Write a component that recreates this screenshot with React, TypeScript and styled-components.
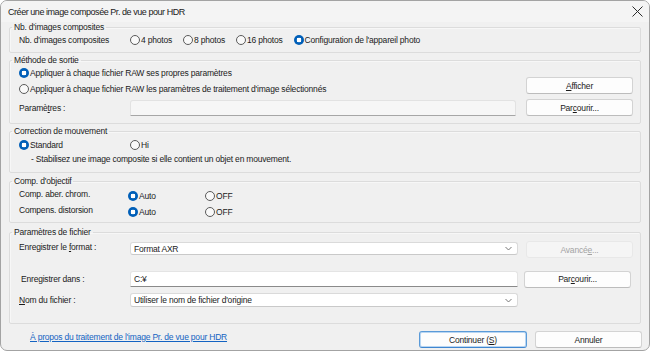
import styled, { createGlobalStyle } from "styled-components";

const GlobalStyle = createGlobalStyle`
  html, body {
    margin: 0;
    padding: 0;
    background: #ffffff;
  }
  body {
    font-family: "Liberation Sans", Arial, sans-serif;
  }
`;

const Radio = ({ checked, children }: { checked?: boolean; children: React.ReactNode }) => (
  <RadioLabel>
    <Circle $checked={!!checked} />
    <span>{children}</span>
  </RadioLabel>
);

const Chevron = () => (
  <svg width="7" height="5" viewBox="0 0 7 5">
    <path d="M0.5 1 L3.5 4 L6.5 1" fill="none" stroke="#6a6a6a" strokeWidth="0.9" />
  </svg>
);

const App = () => {
  return (
    <>
      <GlobalStyle />
      <Window>
        <TitleBar>
          <Title>Créer une image composée Pr. de vue pour HDR</Title>
          <CloseButton aria-label="Fermer">
            <svg width="11" height="11" viewBox="0 0 11 11">
              <path d="M0.5 0.5 L10.5 10.5 M10.5 0.5 L0.5 10.5" stroke="#2b2b2b" strokeWidth="1" />
            </svg>
          </CloseButton>
        </TitleBar>

        <Body>
          {/* Nb. d'images */}
          <Group $mt={0} $pb={4}>
            <Legend>Nb. d'images composites</Legend>
            <Row $h={16}>
              <RowLabel $w={111}>Nb. d'images composites</RowLabel>
              <Options>
                <Radio>4 photos</Radio>
                <Radio>8 photos</Radio>
                <Radio>16 photos</Radio>
                <Radio checked>Configuration de l'appareil photo</Radio>
              </Options>
            </Row>
          </Group>

          {/* Méthode de sortie */}
          <Group $mt={2} $pb={7}>
            <Legend>Méthode de sortie</Legend>
            <Split>
              <Column>
                <Row $h={16}>
                  <Radio checked>Appliquer à chaque fichier RAW ses propres paramètres</Radio>
                </Row>
                <Row $h={16}>
                  <Radio>
                    App<U>l</U>iquer à chaque fichier RAW les paramètres de traitement d'image sélectionnés
                  </Radio>
                </Row>
                <Row $h={17} $mt={2}>
                  <RowLabel $w={111}>
                    Paramè<U>t</U>res :
                  </RowLabel>
                  <Field $disabled />
                </Row>
              </Column>
              <ButtonColumn>
                <Button>
                  <U>A</U>fficher
                </Button>
                <Button>
                  Par<U>c</U>ourir...
                </Button>
              </ButtonColumn>
            </Split>
          </Group>

          {/* Correction de mouvement */}
          <Group $mt={2} $pb={6}>
            <Legend>Correction de mouvement</Legend>
            <Stack $pt={2}>
              <Row $h={14}>
                <OptionCell $w={111}>
                  <Radio checked>Standard</Radio>
                </OptionCell>
                <Radio>Hi</Radio>
              </Row>
              <Row $h={14}>
                <Note>- Stabilisez une image composite si elle contient un objet en mouvement.</Note>
              </Row>
            </Stack>
          </Group>

          {/* Comp. d'objectif */}
          <Group $mt={3} $pb={2}>
            <Legend>Comp. d'objectif</Legend>
            <Stack $pt={2}>
              <Row $h={16}>
                <RowLabel $w={109} $raise>Comp. aber. chrom.</RowLabel>
                <OptionCell $w={77}>
                  <Radio checked>Auto</Radio>
                </OptionCell>
                <Radio>OFF</Radio>
              </Row>
              <Row $h={16}>
                <RowLabel $w={109} $raise>Compens. distorsion</RowLabel>
                <OptionCell $w={77}>
                  <Radio checked>Auto</Radio>
                </OptionCell>
                <Radio>OFF</Radio>
              </Row>
            </Stack>
          </Group>

          {/* Paramètres de fichier */}
          <Group $mt={4} $pb={16}>
            <Legend>Paramètres de fichier</Legend>
            <Stack $pt={4}>
              <Row $h={17} $top>
                <RowLabel $w={111} $top>
                  Enregistrer le <U>f</U>ormat :
                </RowLabel>
                <Select>
                  <span>Format AXR</span>
                  <Chevron />
                </Select>
                <Button $disabled>
                  Avancé<U>e</U>...
                </Button>
              </Row>
              <Row $h={16} $mt={13}>
                <RowLabel $w={111} $indent={2}>
                  Enregistrer dans :
                </RowLabel>
                <Field>C:¥</Field>
                <Button $shift={-2}>
                  Par<U>c</U>ourir...
                </Button>
              </Row>
              <Row $h={14} $mt={6}>
                <RowLabel $w={111}>
                  <U>N</U>om du fichier :
                </RowLabel>
                <Select $h={14}>
                  <span>Utiliser le nom de fichier d'origine</span>
                  <Chevron />
                </Select>
                <ButtonSpace />
              </Row>
            </Stack>
          </Group>
        </Body>

        <Footer>
          <HelpLink href="#">À propos du traitement de l'image Pr. de vue pour HDR</HelpLink>
          <FooterButtons>
            <Button $primary $w={108}>
              Continuer (<U>S</U>)
            </Button>
            <Button $w={107}>Annuler</Button>
          </FooterButtons>
        </Footer>
      </Window>
    </>
  );
};

export default App;

// styles
const Window = styled.div`
  width: 650px;
  height: 351px;
  box-sizing: border-box;
  border: 1px solid #a3a3a3;
  border-radius: 7px;
  background: #f0f0f0;
  overflow: hidden;
  display: flex;
  flex-direction: column;
  font-size: 8.5px;
  letter-spacing: -0.2px;
  color: #1b1b1b;
`;

const TitleBar = styled.div`
  height: 21px;
  flex-shrink: 0;
  display: flex;
  align-items: center;
  justify-content: space-between;
  padding: 0 6px 0 7px;
  background: #f4f4f4;
`;

const Title = styled.div`
  font-size: 9px;
  letter-spacing: -0.45px;
  color: #1a1a1a;
`;

const CloseButton = styled.div`
  display: flex;
  align-items: center;
  justify-content: center;
  width: 11px;
  height: 11px;
`;

const Body = styled.div`
  display: flex;
  flex-direction: column;
  padding: 0 8px;
`;

const Group = styled.fieldset<{ $mt: number; $pb: number }>`
  margin: ${({ $mt }) => $mt}px 0 0;
  padding: 0 7px ${({ $pb }) => $pb}px 9px;
  border: 1px solid #dcdcdc;
  border-radius: 2px;
  box-shadow: inset 1px 1px 0 #f7f7f7;
  min-width: 0;
`;

const Legend = styled.legend`
  padding: 0 2px;
  margin-left: -7px;
  line-height: 10px;
  height: 10px;
`;

const Stack = styled.div<{ $pt?: number }>`
  display: flex;
  flex-direction: column;
  padding-top: ${({ $pt }) => $pt ?? 0}px;
`;

const Row = styled.div<{ $h: number; $mt?: number; $top?: boolean }>`
  display: flex;
  align-items: ${({ $top }) => ($top ? "flex-start" : "center")};
  height: ${({ $h }) => $h}px;
  margin-top: ${({ $mt }) => $mt ?? 0}px;
  white-space: nowrap;
`;

const RowLabel = styled.div<{ $w: number; $indent?: number; $raise?: boolean; $top?: boolean }>`
  width: ${({ $w }) => $w}px;
  flex-shrink: 0;
  padding-left: ${({ $indent }) => $indent ?? 0}px;
  box-sizing: border-box;
  line-height: 12px;
  margin-top: ${({ $top }) => ($top ? "0" : "0")};
  position: relative;
  top: ${({ $raise }) => ($raise ? "-2px" : "0")};
`;

const Options = styled.div`
  display: flex;
  align-items: center;
  gap: 11px;
`;

const OptionCell = styled.div<{ $w: number }>`
  width: ${({ $w }) => $w}px;
  flex-shrink: 0;
  display: flex;
  align-items: center;
`;

const RadioLabel = styled.label`
  display: inline-flex;
  align-items: center;
  gap: 1px;
  white-space: nowrap;
  line-height: 12px;
`;

const Circle = styled.span<{ $checked: boolean }>`
  width: 10px;
  height: 10px;
  box-sizing: border-box;
  border-radius: 50%;
  flex-shrink: 0;
  border: ${({ $checked }) => ($checked ? "none" : "1px solid #5a5a5a")};
  background: ${({ $checked }) =>
    $checked ? "radial-gradient(circle, #ffffff 0 2.2px, #005fb8 2.6px)" : "#f9f9f9"};
`;

const Note = styled.div`
  padding-left: 12px;
  line-height: 12px;
`;

const U = styled.span`
  text-decoration: underline;
  text-underline-offset: 1px;
`;

const Split = styled.div`
  display: flex;
  gap: 10px;
`;

const Column = styled.div`
  display: flex;
  flex-direction: column;
  flex: 1;
  min-width: 0;
`;

const ButtonColumn = styled.div`
  display: flex;
  flex-direction: column;
  gap: 5px;
  width: 107px;
  margin-top: 12px;
`;

const Field = styled.div<{ $disabled?: boolean }>`
  flex: 1;
  align-self: stretch;
  margin-top: ${({ $disabled }) => ($disabled ? "1px" : "0")};
  box-sizing: border-box;
  display: flex;
  align-items: center;
  padding-left: 3px;
  background: ${({ $disabled }) => ($disabled ? "#f6f6f6" : "#ffffff")};
  border: 1px solid ${({ $disabled }) => ($disabled ? "#e2e2e2" : "#e4e4e4")};
  border-bottom: 1px solid ${({ $disabled }) => ($disabled ? "#a6a6a6" : "#8a8a8a")};
  border-radius: 3px 3px 1px 1px;
  max-width: ${({ $disabled }) => ($disabled ? "386px" : "388px")};
  margin-right: ${({ $disabled }) => ($disabled ? "0" : "8px")};
`;

const Select = styled.div<{ $h?: number }>`
  width: 388px;
  height: ${({ $h }) => $h ?? 13}px;
  margin-top: ${({ $h }) => ($h ? "0" : "1px")};
  margin-right: 8px;
  box-sizing: border-box;
  flex-shrink: 0;
  display: flex;
  align-items: center;
  justify-content: space-between;
  padding: 0 5px 0 3px;
  background: #ffffff;
  border: 1px solid #dadada;
  border-bottom-color: #c9c9c9;
  border-radius: 3px;
`;

const Button = styled.div<{ $disabled?: boolean; $primary?: boolean; $w?: number; $shift?: number }>`
  width: ${({ $w }) => $w ?? 107}px;
  height: 17px;
  box-sizing: border-box;
  flex-shrink: 0;
  display: flex;
  align-items: center;
  justify-content: center;
  position: relative;
  left: ${({ $shift }) => $shift ?? 0}px;
  border-radius: 3px;
  background: ${({ $disabled }) => ($disabled ? "#f5f5f5" : "#fdfdfd")};
  color: ${({ $disabled }) => ($disabled ? "#a3a3a3" : "#1b1b1b")};
  border: 1px solid
    ${({ $disabled, $primary }) => ($primary ? "#5a9ad8" : $disabled ? "#e8e8e8" : "#d3d3d3")};
  border-bottom-color: ${({ $disabled, $primary }) =>
    $primary ? "#3f86d0" : $disabled ? "#e8e8e8" : "#bcbcbc"};
  box-shadow: ${({ $primary }) => ($primary ? "inset 0 0 0 1px #b9d6f2" : "none")};
`;

const ButtonSpace = styled.div`
  width: 107px;
  flex-shrink: 0;
`;

const Footer = styled.div`
  display: flex;
  align-items: center;
  padding: 7px 7px 0 29px;
`;

const HelpLink = styled.a`
  flex: 1;
  color: #1363c2;
  text-decoration: underline;
  text-underline-offset: 1px;
  line-height: 12px;
  margin-top: -5px;
`;

const FooterButtons = styled.div`
  display: flex;
  gap: 8px;
`;
